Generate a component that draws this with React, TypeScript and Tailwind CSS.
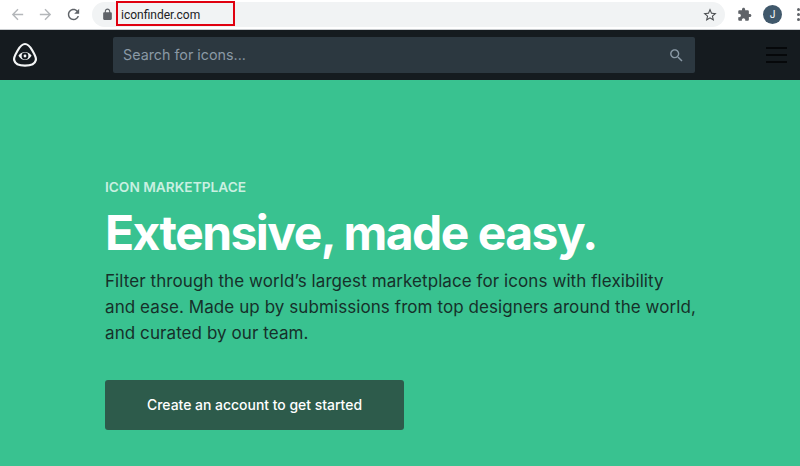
import React from "react";

function Icon({ d, size, color, className }: { d: string; size: number; color: string; className?: string }) {
  return (
    <svg width={size} height={size} viewBox="0 0 24 24" fill={color} className={className}>
      <path d={d} />
    </svg>
  );
}

const ARROW_LEFT = "M20 11H7.83l5.59-5.59L12 4l-8 8 8 8 1.41-1.41L7.83 13H20v-2z";
const ARROW_RIGHT = "M4 11h12.17l-5.59-5.59L12 4l8 8-8 8-1.41-1.41L16.17 13H4v-2z";
const REFRESH = "M17.65 6.35C16.2 4.9 14.21 4 12 4c-4.42 0-7.99 3.58-7.99 8s3.57 8 7.99 8c3.73 0 6.84-2.55 7.73-6h-2.08c-.82 2.33-3.04 4-5.65 4-3.31 0-6-2.69-6-6s2.69-6 6-6c1.66 0 3.14.69 4.22 1.78L13 11h7V4l-2.35 2.35z";
const LOCK = "M18 8h-1V6c0-2.76-2.24-5-5-5S7 3.24 7 6v2H6c-1.1 0-2 .9-2 2v10c0 1.1.9 2 2 2h12c1.1 0 2-.9 2-2V10c0-1.1-.9-2-2-2zM9 6c0-1.66 1.34-3 3-3s3 1.34 3 3v2H9V6z";
const STAR = "M22 9.24l-7.19-.62L12 2 9.19 8.63 2 9.24l5.46 4.73L5.82 21 12 17.27 18.18 21l-1.63-7.03L22 9.24zM12 15.4l-3.76 2.27 1-4.28-3.32-2.88 4.38-.38L12 6.1l1.71 4.04 4.38.38-3.32 2.88 1 4.28L12 15.4z";
const EXT = "M20.5 11H19V7c0-1.1-.9-2-2-2h-4V3.5C13 2.12 11.88 1 10.5 1S8 2.12 8 3.5V5H4c-1.1 0-1.99.9-1.99 2v3.8H3.5c1.49 0 2.7 1.21 2.7 2.7s-1.21 2.7-2.7 2.7H2V20c0 1.1.9 2 2 2h3.8v-1.5c0-1.49 1.21-2.7 2.7-2.7 1.49 0 2.7 1.21 2.7 2.7V22H17c1.1 0 2-.9 2-2v-4h1.5c1.38 0 2.5-1.12 2.5-2.5S21.88 11 20.5 11z";
const SEARCH = "M15.5 14h-.79l-.28-.27C15.41 12.59 16 11.11 16 9.5 16 5.91 13.09 3 9.5 3S3 5.91 3 9.5 5.91 16 9.5 16c1.61 0 3.09-.59 4.23-1.57l.27.28v.79l5 4.99L20.49 19l-4.99-5zm-6 0C7.01 14 5 11.99 5 9.5S7.01 5 9.5 5 14 7.01 14 9.5 11.99 14 9.5 14z";

function Logo() {
  return (
    <svg width="26" height="26" viewBox="0 0 26 26" fill="none">
      <path d="M13 2C15.8 2 17.8 4.2 20 8C22.4 12.2 24.6 15 23.8 18.2C23 21.6 19 23.6 13 23.6C7 23.6 3 21.6 2.2 18.2C1.4 15 3.6 12.2 6 8C8.2 4.2 10.2 2 13 2Z" stroke="#f4f6f6" strokeWidth="2.2" />
      <path d="M6.4 13.8C8.2 11.2 10.4 10 13 10C15.6 10 17.8 11.2 19.6 13.8C17.8 16.6 15.6 18 13 18C10.4 18 8.2 16.6 6.4 13.8Z" fill="#f4f6f6" />
      <circle cx="13" cy="14" r="3.4" fill="#151b1f" />
      <circle cx="13" cy="14" r="1.4" fill="#f4f6f6" />
    </svg>
  );
}

export default function App() {
  return (
    <div className="w-[800px] h-[466px] overflow-hidden flex flex-col bg-[#39c290] font-['Inter','Liberation_Sans',sans-serif]">
      <div className="h-[30px] shrink-0 bg-white flex items-center pl-[9px] relative border-b border-[#c9cccf]">
        <Icon d={ARROW_LEFT} size={17} color="#b4b7ba" />
        <Icon d={ARROW_RIGHT} size={17} color="#b4b7ba" className="ml-[11px]" />
        <Icon d={REFRESH} size={17} color="#5f6368" className="ml-[11px]" />
        <div className="ml-[10px] w-[633px] h-[25px] rounded-full bg-[#f1f3f4] flex items-center pl-[9px] pr-[7px]">
          <Icon d={LOCK} size={13} color="#5f6368" />
          <span className="ml-[7px] text-[12px] text-[#202124] font-['Roboto',sans-serif]">iconfinder.com</span>
          <Icon d={STAR} size={16} color="#4a4d50" className="ml-auto" />
        </div>
        <Icon d={EXT} size={15} color="#5f6368" className="ml-[12px]" />
        <div className="ml-[11px] w-[19px] h-[19px] rounded-full bg-[#40586b] text-white text-[10px] flex items-center justify-center shrink-0">J</div>
        <div className="ml-[15px] flex flex-col gap-[2px]">
          <span className="w-[3px] h-[3px] rounded-full bg-[#5f6368]" />
          <span className="w-[3px] h-[3px] rounded-full bg-[#5f6368]" />
          <span className="w-[3px] h-[3px] rounded-full bg-[#5f6368]" />
        </div>
        <div className="absolute left-[116px] top-[1px] w-[119px] h-[25px] border-[2px] border-[#e0000f]" />
      </div>
      <div className="h-[50px] shrink-0 bg-[#151b1f] flex items-center pl-[12px] pr-[13px]">
        <Logo />
        <div className="ml-[75px] w-[582px] h-[36px] rounded-[2px] bg-[#2c3840] flex items-center pl-[10px] pr-[10px]">
          <span className="text-[14.3px] text-[#8a99a5]">Search for icons...</span>
          <Icon d={SEARCH} size={17} color="#8a99a5" className="ml-auto" />
        </div>
        <div className="ml-auto w-[21px] flex flex-col gap-[5px]">
          <span className="h-[2px] bg-[#06080a]" />
          <span className="h-[2px] bg-[#06080a]" />
          <span className="h-[2px] bg-[#06080a]" />
        </div>
      </div>
      <div className="flex-1 pl-[105px] pt-[99px]">
        <div className="text-[13.7px] leading-[16px] font-semibold text-[#c9f0e1]">ICON MARKETPLACE</div>
        <h1 className="mt-[9px] text-[48px] leading-[58px] font-bold tracking-[-1.55px] text-white">Extensive, made easy.</h1>
        <p className="mt-[6px] w-[600px] text-[17px] leading-[26px] tracking-[0.08px] text-[#16302a]">
          Filter through the world’s largest marketplace for icons with flexibility
          <br />
          and ease. Made up by submissions from top designers around the world,
          <br />
          and curated by our team.
        </p>
        <button className="mt-[34px] w-[299px] h-[50px] rounded-[3px] bg-[#2d5b4b] text-white text-[13.95px] font-medium flex items-center justify-center">
          Create an account to get started
        </button>
      </div>
    </div>
  );
}
